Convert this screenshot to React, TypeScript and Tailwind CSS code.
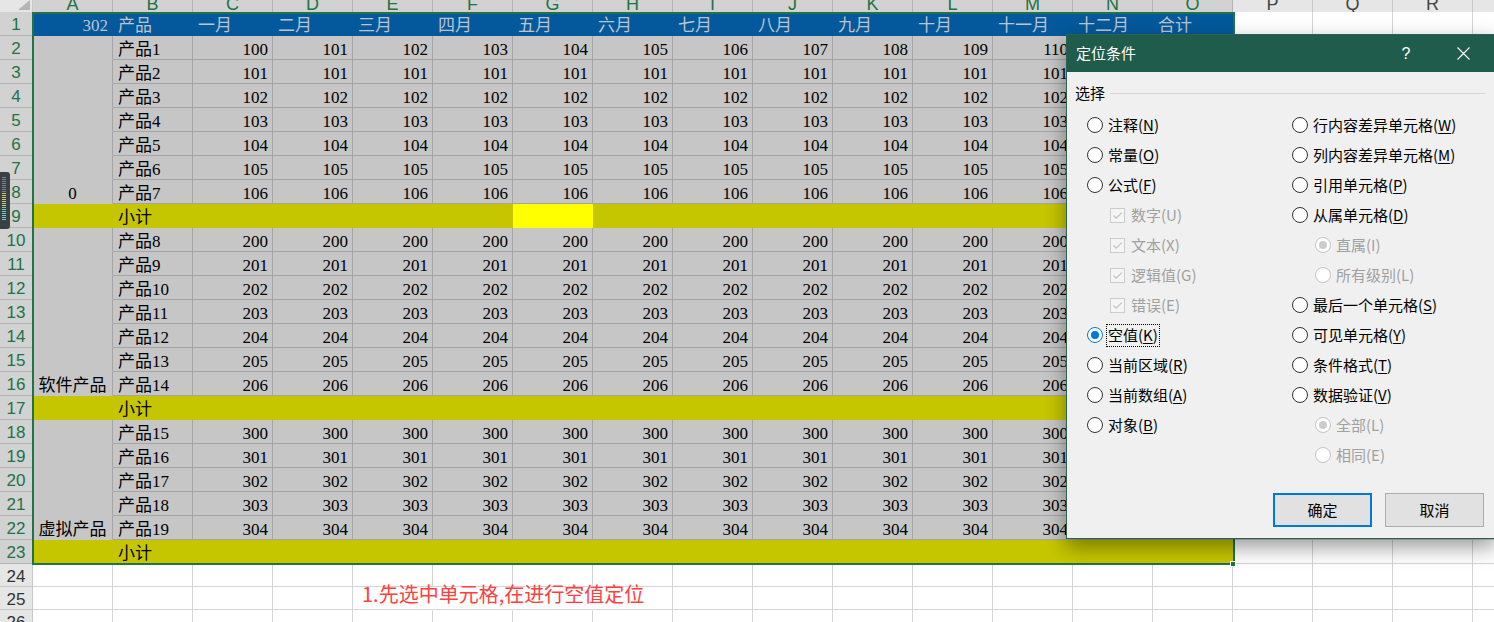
import type { ReactNode } from "react";

const COLS = "ABCDEFGHIJKLMNOPQRS".split("");
const MONTHS = ["一月", "二月", "三月", "四月", "五月", "六月", "七月", "八月", "九月", "十月", "十一月", "十二月"];

type Row =
  | { n: number; kind: "head" }
  | { n: number; kind: "data"; a?: string; name: string; vals: number[] }
  | { n: number; kind: "sub" }
  | { n: number; kind: "blank" };

function buildRows(): Row[] {
  const rows: Row[] = [{ n: 1, kind: "head" }];
  const groups = [
    { base: 100, count: 7, first: 1, label: "0" },
    { base: 200, count: 7, first: 8, label: "软件产品" },
    { base: 300, count: 5, first: 15, label: "虚拟产品" },
  ];
  let n = 2;
  for (const g of groups) {
    for (let k = 0; k < g.count; k++) {
      // 第一行按月份递增，其余每行数值相同
      const vals = MONTHS.map((_, m) => (n === 2 ? g.base + m : g.base + k));
      rows.push({
        n,
        kind: "data",
        a: k === g.count - 1 ? g.label : undefined,
        name: `产品${g.first + k}`,
        vals,
      });
      n++;
    }
    rows.push({ n, kind: "sub" });
    n++;
  }
  rows.push({ n: 24, kind: "blank" }, { n: 25, kind: "blank" }, { n: 26, kind: "blank" });
  return rows;
}

const ROWS = buildRows();

function Cell({ row, i }: { row: Row; i: number }) {
  const inSel = i < 15 && row.n <= 23;
  let cls = "bg-white border-[#d4d4d4]";
  let align = "justify-start pl-[5px]";
  let content: ReactNode = null;

  if (inSel && row.kind === "head") {
    cls = "bg-[#03599b] border-[#03599b] text-[#bcc5ce]";
    if (i === 0) {
      content = "302";
      align = "justify-end pr-[4px]";
    } else if (i === 1) content = "产品";
    else if (i === 14) content = "合计";
    else content = MONTHS[i - 2];
  } else if (inSel && row.kind === "data") {
    cls = i === 0 ? "bg-[#c6c6c6] border-[#a5a5a5] border-b-[#c6c6c6]" : "bg-[#c6c6c6] border-[#a5a5a5]";
    if (i === 0) {
      content = row.a;
      align = "justify-center";
    } else if (i === 1) content = row.name;
    else if (i < 14) {
      content = row.vals[i - 2];
      align = "justify-end pr-[4px]";
    }
  } else if (inSel && row.kind === "sub") {
    cls = row.n === 9 && i === 6 ? "bg-[#ffff00] border-[#ffff00]" : "bg-[#c6c600] border-[#c6c600]";
    if (i === 1) content = "小计";
  } else if (row.n === 25 && i >= 4 && i <= 6) {
    cls = "bg-white border-[#d4d4d4] border-r-white";
  }

  return (
    <div className={`w-[80px] shrink-0 flex items-center pt-[4px] border-r border-b whitespace-nowrap ${cls} ${align}`}>
      {row.n === 25 && i === 4 ? (
        <span className="relative z-10 pl-[4px] -translate-y-[6px] font-['Noto_Sans_CJK_SC',sans-serif] text-[20px] text-[#ff4040]">
          1.先选中单元格,在进行空值定位
        </span>
      ) : (
        content
      )}
    </div>
  );
}

function SheetRow({ row }: { row: Row }) {
  const sel = row.n <= 23;
  return (
    <div className={`flex ${sel ? "h-[24px]" : "h-[23px]"}`}>
      <div
        className={`w-[33px] shrink-0 flex items-center justify-center pt-[3px] border-r border-b font-['Liberation_Sans',sans-serif] text-[17px] ${
          sel ? "bg-[#d2d2d2] border-[#b4b4b4] text-[#217346]" : "bg-[#e6e6e6] border-[#c8c8c8] text-[#333]"
        }`}
      >
        {row.n}
      </div>
      {COLS.map((c, i) => (
        <Cell key={c} row={row} i={i} />
      ))}
    </div>
  );
}

function ColumnHeader() {
  return (
    <div className="flex h-[12px]">
      <div className="relative w-[33px] shrink-0 bg-[#e6e6e6] border-r border-[#c8c8c8] overflow-hidden">
        <svg width="33" height="12" className="block">
          <polygon points="30,0 30,10 18,10" fill="#b5b5b5" />
        </svg>
      </div>
      {COLS.map((c, i) => (
        <div
          key={c}
          className={`w-[80px] shrink-0 h-[12px] overflow-hidden border-r ${
            i < 15 ? "bg-[#d2d2d2] border-[#b4b4b4] text-[#217346]" : "bg-[#e6e6e6] border-[#c8c8c8] text-[#444]"
          }`}
        >
          <div className="-mt-[6px] h-[20px] flex items-center justify-center font-['Liberation_Sans',sans-serif] text-[18px]">
            {c}
          </div>
        </div>
      ))}
    </div>
  );
}

function Radio({ checked, disabled }: { checked?: boolean; disabled?: boolean }) {
  const ring = disabled ? "border-[#c4c4c4]" : checked ? "border-[#0078d7]" : "border-[#333]";
  return (
    <span className={`w-[16px] h-[16px] shrink-0 rounded-full border bg-white flex items-center justify-center ${ring}`}>
      {checked && <span className={`w-[8px] h-[8px] rounded-full ${disabled ? "bg-[#cccccc]" : "bg-[#0078d7]"}`} />}
    </span>
  );
}

function Check() {
  return (
    <span className="w-[15px] h-[15px] shrink-0 border border-[#cccccc] bg-[#f5f5f5] flex items-center justify-center">
      <svg width="13" height="13" viewBox="0 0 13 13">
        <path d="M2.5 6.5 L5.2 9.2 L10.8 3.6" fill="none" stroke="#c2c2c2" strokeWidth="1.3" />
      </svg>
    </span>
  );
}

type Opt = {
  label: string;
  key?: string;
  type: "radio" | "check" | "sub";
  checked?: boolean;
  focus?: boolean;
};

const LEFT: Opt[] = [
  { label: "注释", key: "N", type: "radio" },
  { label: "常量", key: "O", type: "radio" },
  { label: "公式", key: "F", type: "radio" },
  { label: "数字(U)", type: "check" },
  { label: "文本(X)", type: "check" },
  { label: "逻辑值(G)", type: "check" },
  { label: "错误(E)", type: "check" },
  { label: "空值", key: "K", type: "radio", checked: true, focus: true },
  { label: "当前区域", key: "R", type: "radio" },
  { label: "当前数组", key: "A", type: "radio" },
  { label: "对象", key: "B", type: "radio" },
];

const RIGHT: Opt[] = [
  { label: "行内容差异单元格", key: "W", type: "radio" },
  { label: "列内容差异单元格", key: "M", type: "radio" },
  { label: "引用单元格", key: "P", type: "radio" },
  { label: "从属单元格", key: "D", type: "radio" },
  { label: "直属(I)", type: "sub", checked: true },
  { label: "所有级别(L)", type: "sub" },
  { label: "最后一个单元格", key: "S", type: "radio" },
  { label: "可见单元格", key: "Y", type: "radio" },
  { label: "条件格式", key: "T", type: "radio" },
  { label: "数据验证", key: "V", type: "radio" },
  { label: "全部(L)", type: "sub", checked: true },
  { label: "相同(E)", type: "sub" },
];

function Option({ o }: { o: Opt }) {
  const disabled = o.type !== "radio";
  const text = o.key ? (
    <>
      {o.label}(<span className="underline underline-offset-2">{o.key}</span>)
    </>
  ) : (
    o.label
  );
  return (
    <div className={`h-[30px] flex items-center ${o.type === "radio" ? "" : "pl-[23px]"}`}>
      {o.type === "check" ? <Check /> : <Radio checked={o.checked} disabled={disabled} />}
      {o.focus ? (
        <span className="ml-[3px] h-[23px] px-[1px] flex items-center border border-dotted border-black">{text}</span>
      ) : (
        <span className={`${o.type === "check" ? "ml-[6px]" : "ml-[5px]"} ${disabled ? "text-[#a0a0a0]" : ""}`}>{text}</span>
      )}
    </div>
  );
}

function GotoDialog() {
  return (
    <div className="absolute left-[1066px] top-[34px] w-[430px] h-[505px] border border-[#2d5f52] bg-[#f0f0f0] shadow-[0_8px_20px_rgba(0,0,0,0.4)] font-['Noto_Sans_CJK_SC',sans-serif] text-[15px] text-black">
      <div className="h-[37px] bg-[#1f5c4b] flex items-center pl-[9px] pr-[22px] text-white">
        <span>定位条件</span>
        <span className="ml-auto w-[20px] text-center font-['Liberation_Sans',sans-serif] text-[16px]">?</span>
        <span className="ml-[37px] w-[20px] flex justify-center">
          <svg width="13" height="13" viewBox="0 0 13 13">
            <path d="M0.5 0.5 L12.5 12.5 M12.5 0.5 L0.5 12.5" stroke="white" strokeWidth="1.2" />
          </svg>
        </span>
      </div>

      <div className="mt-[10px] h-[22px] flex items-center pl-[8px] pr-[10px]">
        <span>选择</span>
        <div className="ml-[5px] flex-1 h-px bg-[#d5d5d5]" />
      </div>

      <div className="mt-[6px] flex pl-[20px]">
        <div className="w-[205px]">
          {LEFT.map((o) => (
            <Option key={o.label} o={o} />
          ))}
        </div>
        <div>
          {RIGHT.map((o) => (
            <Option key={o.label} o={o} />
          ))}
        </div>
      </div>

      <div className="mt-[23px] flex justify-end gap-[13px] pr-[11px]">
        <button className="w-[99px] h-[34px] border-2 border-[#0078d7] bg-[#e1e1e1]">确定</button>
        <button className="w-[99px] h-[34px] border border-[#adadad] bg-[#e1e1e1]">取消</button>
      </div>
    </div>
  );
}

function SideWidget() {
  const bars = Array.from({ length: 22 }, (_, k) => k);
  return (
    <div className="absolute left-0 top-[172px] w-[10px] h-[57px] bg-[#3b4046] rounded-r-[3px]">
      <svg width="10" height="57" className="block">
        {bars.map((k) => (
          <rect
            key={k}
            x="2"
            y={5 + k * 2}
            width="4"
            height="1"
            fill={k < 8 ? "#7c8288" : k < 15 ? "#c9cf6a" : "#6fcfc4"}
          />
        ))}
      </svg>
    </div>
  );
}

export default function App() {
  return (
    <div className="relative w-[1494px] h-[622px] overflow-hidden bg-white font-['Liberation_Serif','Noto_Sans_CJK_SC',serif] text-[17px] text-black">
      <ColumnHeader />
      {ROWS.map((r) => (
        <SheetRow key={r.n} row={r} />
      ))}

      {/* selection A1:O23 */}
      <div className="absolute left-[32px] top-[12px] w-[1203px] h-[553px] border-2 border-[#217346] pointer-events-none" />
      <div className="absolute left-[1230px] top-[561px] w-[6px] h-[6px] bg-[#217346] border border-white" />

      <SideWidget />
      <GotoDialog />
    </div>
  );
}
